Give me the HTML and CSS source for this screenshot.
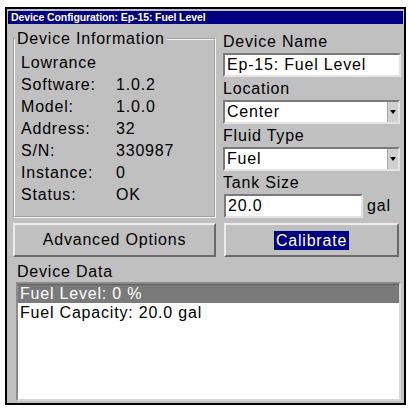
FILE: index.html
```html
<!DOCTYPE html>
<html>
<head>
    <title>Device Configuration</title>
    <link rel="stylesheet" href="styles.css">
</head>
<body>
    <div class="window">
        <div class="titlebar">Device Configuration: Ep-15: Fuel Level</div>
        <div class="content">
            <fieldset class="info">
                <legend>Device Information</legend>
                <div class="info-row"><span class="key">Lowrance</span></div>
                <div class="info-row"><span class="key">Software:</span><span>1.0.2</span></div>
                <div class="info-row"><span class="key">Model:</span><span>1.0.0</span></div>
                <div class="info-row"><span class="key">Address:</span><span>32</span></div>
                <div class="info-row"><span class="key">S/N:</span><span>330987</span></div>
                <div class="info-row"><span class="key">Instance:</span><span>0</span></div>
                <div class="info-row"><span class="key">Status:</span><span>OK</span></div>
            </fieldset>
            <div class="fields">
                <div class="label">Device Name</div>
                <div class="textbox">Ep-15: Fuel Level</div>
                <div class="label">Location</div>
                <div class="combo"><span class="combo-text">Center</span><span class="arrow"></span></div>
                <div class="label">Fluid Type</div>
                <div class="combo"><span class="combo-text">Fuel</span><span class="arrow"></span></div>
                <div class="label">Tank Size</div>
                <div class="tank">
                    <div class="textbox short">20.0</div>
                    <span class="unit">gal</span>
                </div>
            </div>
            <button class="btn">Advanced Options</button>
            <button class="btn calibrate"><span class="focus">Calibrate</span></button>
        </div>
        <div class="data">
            <div class="label data-label">Device Data</div>
            <div class="listbox">
                <div class="item selected">Fuel Level: 0 %</div>
                <div class="item">Fuel Capacity: 20.0 gal</div>
            </div>
        </div>
    </div>
</body>
</html>
```

FILE: styles.css
```css
body {
    margin: 0;
    background-color: white;
    font-family: "Liberation Sans", Arial, sans-serif;
    font-size: 16px;
    letter-spacing: 0.8px;
    color: black;
}

.window {
    margin: 7px 0 0 5px;
    width: 401px;
    height: 398px;
    box-sizing: border-box;
    border: 2px solid black;
    background-color: #c0c0c0;
    display: flex;
    flex-direction: column;
}

.titlebar {
    margin: 2px 1px 0 1px;
    height: 13px;
    line-height: 13px;
    padding-left: 3px;
    background-color: #000080;
    color: white;
    font-weight: bold;
    font-size: 10.5px;
    letter-spacing: -0.1px;
    white-space: nowrap;
    overflow: hidden;
}

.content {
    display: grid;
    grid-template-columns: 203px 178px;
    column-gap: 7px;
    row-gap: 5px;
    padding: 6px 2px 0 6px;
}

/* groupe Device Information */
.info {
    margin: 0;
    min-width: 0;
    padding: 4px 0 9px 6px;
    border: 2px groove #f4f4f4;
}

.info legend {
    margin-left: -6px;
    padding: 0 2px;
    line-height: 18px;
}

.info-row {
    display: flex;
    height: 22px;
    line-height: 22px;
}

.key {
    width: 95px;
}

.label {
    height: 23px;
    line-height: 23px;
}

.textbox {
    height: 24px;
    box-sizing: border-box;
    padding-left: 2px;
    line-height: 20px;
    background-color: white;
    border: 2px solid;
    border-color: #7a7a7a #e4e4e4 #e4e4e4 #7a7a7a;
    white-space: nowrap;
}

.combo {
    height: 24px;
    box-sizing: border-box;
    margin-right: 1px;
    display: flex;
    background-color: white;
    border: 2px solid;
    border-color: #7a7a7a #e4e4e4 #e4e4e4 #7a7a7a;
}

.combo-text {
    flex: 1;
    padding-left: 2px;
    line-height: 20px;
}

.arrow {
    width: 10px;
    background-color: #d0d0d0;
    border-left: 1px solid #a8a8a8;
    position: relative;
}

.arrow::after {
    content: "";
    position: absolute;
    left: 2px;
    top: 8px;
    border-left: 3px solid transparent;
    border-right: 3px solid transparent;
    border-top: 4px solid black;
}

.tank {
    display: flex;
    align-items: center;
}

.textbox.short {
    width: 139px;
    margin-left: 1px;
}

.unit {
    margin-left: 4px;
}

.btn {
    height: 34px;
    margin: 0;
    padding: 0;
    font: inherit;
    letter-spacing: inherit;
    color: black;
    background-color: #c0c0c0;
    border: 2px solid;
    border-color: #ececec #6a6a6a #6a6a6a #ececec;
}

.calibrate {
    margin: 0 2px 0 1px;
}

.focus {
    display: inline-block;
    padding: 0 2px;
    line-height: 19px;
    background-color: #000080;
    color: white;
}

.data {
    flex: 1;
    display: flex;
    flex-direction: column;
    padding: 4px 3px 2px 9px;
}

.data-label {
    height: 21px;
    line-height: 21px;
    padding-left: 1px;
}

.listbox {
    flex: 1;
    background-color: white;
    border: 2px solid;
    border-color: #8a8a8a #d8d8d8 #d8d8d8 #8a8a8a;
}

.item {
    height: 19px;
    line-height: 19px;
    padding-left: 2px;
    white-space: nowrap;
}

.item.selected {
    background-color: #7a7a7a;
    border-top: 1px solid #5e5e5e;
    height: 18px;
    line-height: 18px;
    color: white;
}
```
